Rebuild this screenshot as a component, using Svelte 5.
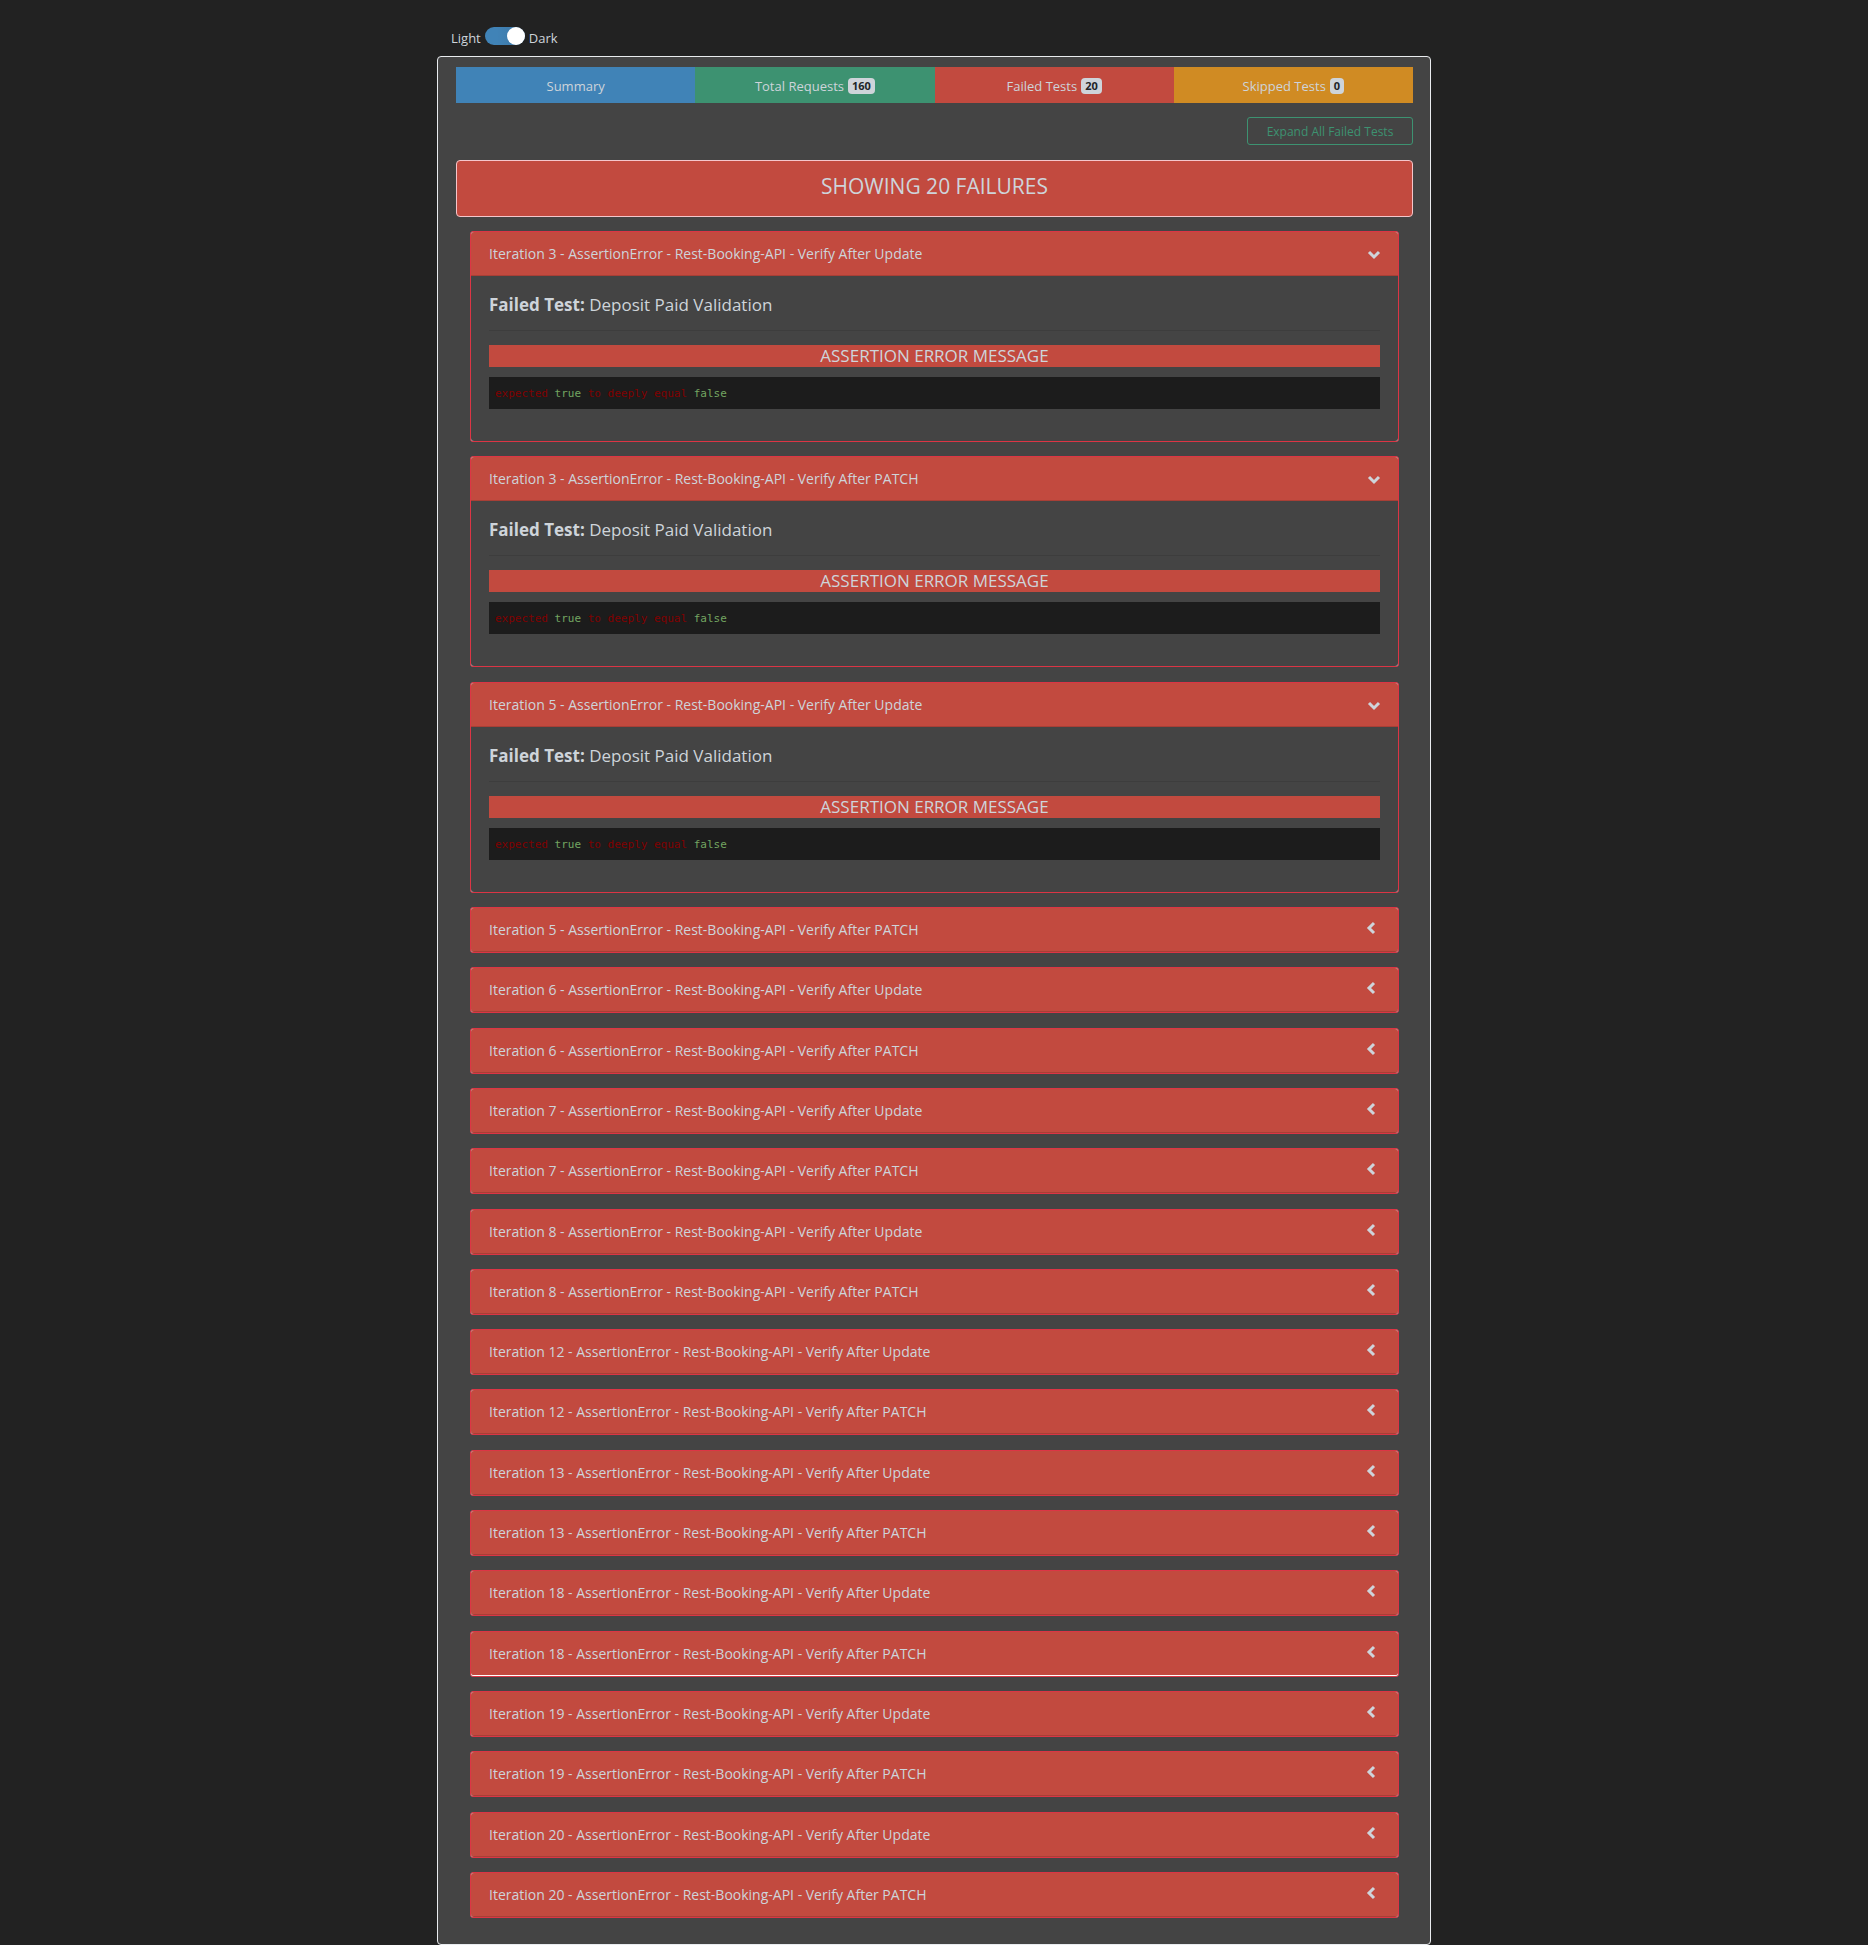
<script>
  const make = (n, kind, open = false, hovered = false) => ({
    title: `Iteration ${n} - AssertionError - Rest-Booking-API - Verify After ${kind}`,
    open,
    hovered
  });

  let dark = $state(true);
  let failures = $state([
    make(3, 'Update', true),
    make(3, 'PATCH', true),
    make(5, 'Update', true),
    make(5, 'PATCH'),
    ...[6, 7, 8, 12, 13, 18, 19, 20].flatMap((n) => [
      make(n, 'Update'),
      make(n, 'PATCH', false, n === 18)
    ])
  ]);

  const tabs = [
    { label: 'Summary', tone: 'blue' },
    { label: 'Total Requests', tone: 'green', count: 160 },
    { label: 'Failed Tests', tone: 'red', count: 20 },
    { label: 'Skipped Tests', tone: 'amber', count: 0 }
  ];

  function expandAll() {
    for (const failure of failures) failure.open = true;
  }
</script>

<div class="page">
  <div class="theme">
    <label for="theme-switch">Light</label>
    <input id="theme-switch" type="checkbox" role="switch" bind:checked={dark} />
    <label for="theme-switch">Dark</label>
  </div>

  <main class="panel">
    <nav class="tabs">
      {#each tabs as tab}
        <a class="tab {tab.tone}" href="#{tab.tone}">
          {tab.label}
          {#if tab.count !== undefined}<span class="badge">{tab.count}</span>{/if}
        </a>
      {/each}
    </nav>

    <button class="expand" type="button" onclick={expandAll}>Expand All Failed Tests</button>

    <h1 class="banner">SHOWING 20 FAILURES</h1>

    <div class="list">
      {#each failures as failure}
        <section class="card">
          <button
            class="head"
            class:shut={!failure.open}
            class:lit={failure.hovered}
            type="button"
            aria-expanded={failure.open}
            onclick={() => (failure.open = !failure.open)}
          >
            <span>{failure.title}</span>
            {#if failure.open}
              <svg width="14" height="14" viewBox="0 0 14 14" aria-hidden="true">
                <path d="M3 5 L8 10 L13 5" />
              </svg>
            {:else}
              <svg width="14" height="14" viewBox="0 0 14 14" aria-hidden="true">
                <path d="M8 0 L3 5 L8 10" />
              </svg>
            {/if}
          </button>
          {#if failure.open}
            <div class="body">
              <h2><strong>Failed Test:</strong> Deposit Paid Validation</h2>
              <hr />
              <h3>ASSERTION ERROR MESSAGE</h3>
              <pre><code>expected <b>true</b> to deeply equal <b>false</b></code></pre>
            </div>
          {/if}
        </section>
      {/each}
    </div>
  </main>
</div>

<style>
  :global(body) {
    margin: 0;
    background: #222;
  }

  .page {
    box-sizing: border-box;
    display: flex;
    flex-direction: column;
    width: 100%;
    max-width: 994px;
    min-height: 100vh;
    margin: 0 auto;
    padding-top: 26px;
    color: #ced4da;
    font-family: 'Open Sans', 'Noto Sans', sans-serif;
    font-size: 13px;
    line-height: 20px;
  }

  .theme {
    display: flex;
    align-items: flex-start;
    gap: 4px;
    height: 30px;
    padding-left: 14px;
  }

  .theme label {
    padding-top: 2px;
  }

  .theme input {
    appearance: none;
    display: flex;
    justify-content: flex-start;
    width: 40px;
    height: 18px;
    margin: 1px 0 0;
    border-radius: 9px;
    background: linear-gradient(90deg, #4083b7 30%, #3f76a3);
  }

  .theme input:checked {
    justify-content: flex-end;
  }

  .theme input::before {
    content: '';
    width: 18px;
    height: 18px;
    border-radius: 50%;
    background: #fff;
  }

  .panel {
    flex: 1;
    display: flex;
    flex-direction: column;
    padding: 10px 17px 26px 18px;
    border: 1px solid #e9ecef;
    border-radius: 4px;
    background: #444;
  }

  .tabs {
    display: grid;
    grid-template-columns: repeat(4, 1fr);
  }

  .tab {
    box-sizing: border-box;
    display: flex;
    align-items: center;
    justify-content: center;
    gap: 4px;
    height: 36px;
    padding-top: 2px;
    color: #ced4da;
    text-decoration: none;
  }

  .blue {
    background: #4083b7;
  }
  .green {
    background: #3d9271;
  }
  .red {
    background: #c24a3f;
  }
  .amber {
    background: #d08b23;
  }

  .badge {
    padding: 0 4px;
    border-radius: 4px;
    background: #ced4da;
    color: #212529;
    font-size: 11px;
    font-weight: 700;
    line-height: 16px;
  }

  .expand {
    align-self: flex-end;
    width: 166px;
    height: 28px;
    margin: 14px 0 15px;
    padding: 2px 0 0;
    border: 1px solid #3d9271;
    border-radius: 3px;
    background: transparent;
    color: #3d9271;
    font: inherit;
    font-size: 12px;
  }

  .banner {
    margin: 0 0 14px;
    padding: 12px 0 17px;
    border: 1px solid #f5c6cb;
    border-radius: 4px;
    background: #c24a3f;
    font-size: 21px;
    font-weight: 400;
    line-height: 26px;
    text-align: center;
  }

  .list {
    flex: 1;
    display: flex;
    flex-direction: column;
    justify-content: space-between;
    gap: 14px;
    padding: 0 14px;
  }

  .card {
    border: 1px solid #dc3545;
    border-radius: 3px;
    background: #ced4da;
  }

  .head {
    display: flex;
    align-items: center;
    justify-content: space-between;
    width: 100%;
    height: 44px;
    padding: 1px 18px 0;
    border: 0;
    border-bottom: 1px solid #a83f36;
    border-radius: 3px 3px 0 0;
    background: #c24a3f;
    color: #ced4da;
    font: inherit;
    font-size: 14px;
    text-align: left;
  }

  .shut {
    border-radius: 3px;
  }

  .lit {
    border-bottom-color: #fff;
  }

  svg {
    overflow: visible;
    fill: none;
    stroke: #ced4da;
    stroke-width: 3;
  }

  .body {
    padding: 18px 18px 32px;
    border-radius: 0 0 3px 3px;
    background: #444;
  }

  h2,
  h3 {
    margin: 0;
    font-size: 17px;
    font-weight: 400;
    line-height: 22px;
  }

  hr {
    height: 1px;
    margin: 14px 0;
    border: 0;
    background: #3d3d3d;
  }

  h3 {
    background: #c24a3f;
    text-align: center;
  }

  pre {
    margin: 10px 0 0;
    padding: 7px 6px 5px;
    background: #1c1c1c;
    color: #800000;
    font-family: 'DejaVu Sans Mono', monospace;
    font-size: 11px;
    line-height: 20px;
  }

  code {
    font: inherit;
  }

  pre b {
    color: #73a561;
    font-weight: 400;
  }
</style>
